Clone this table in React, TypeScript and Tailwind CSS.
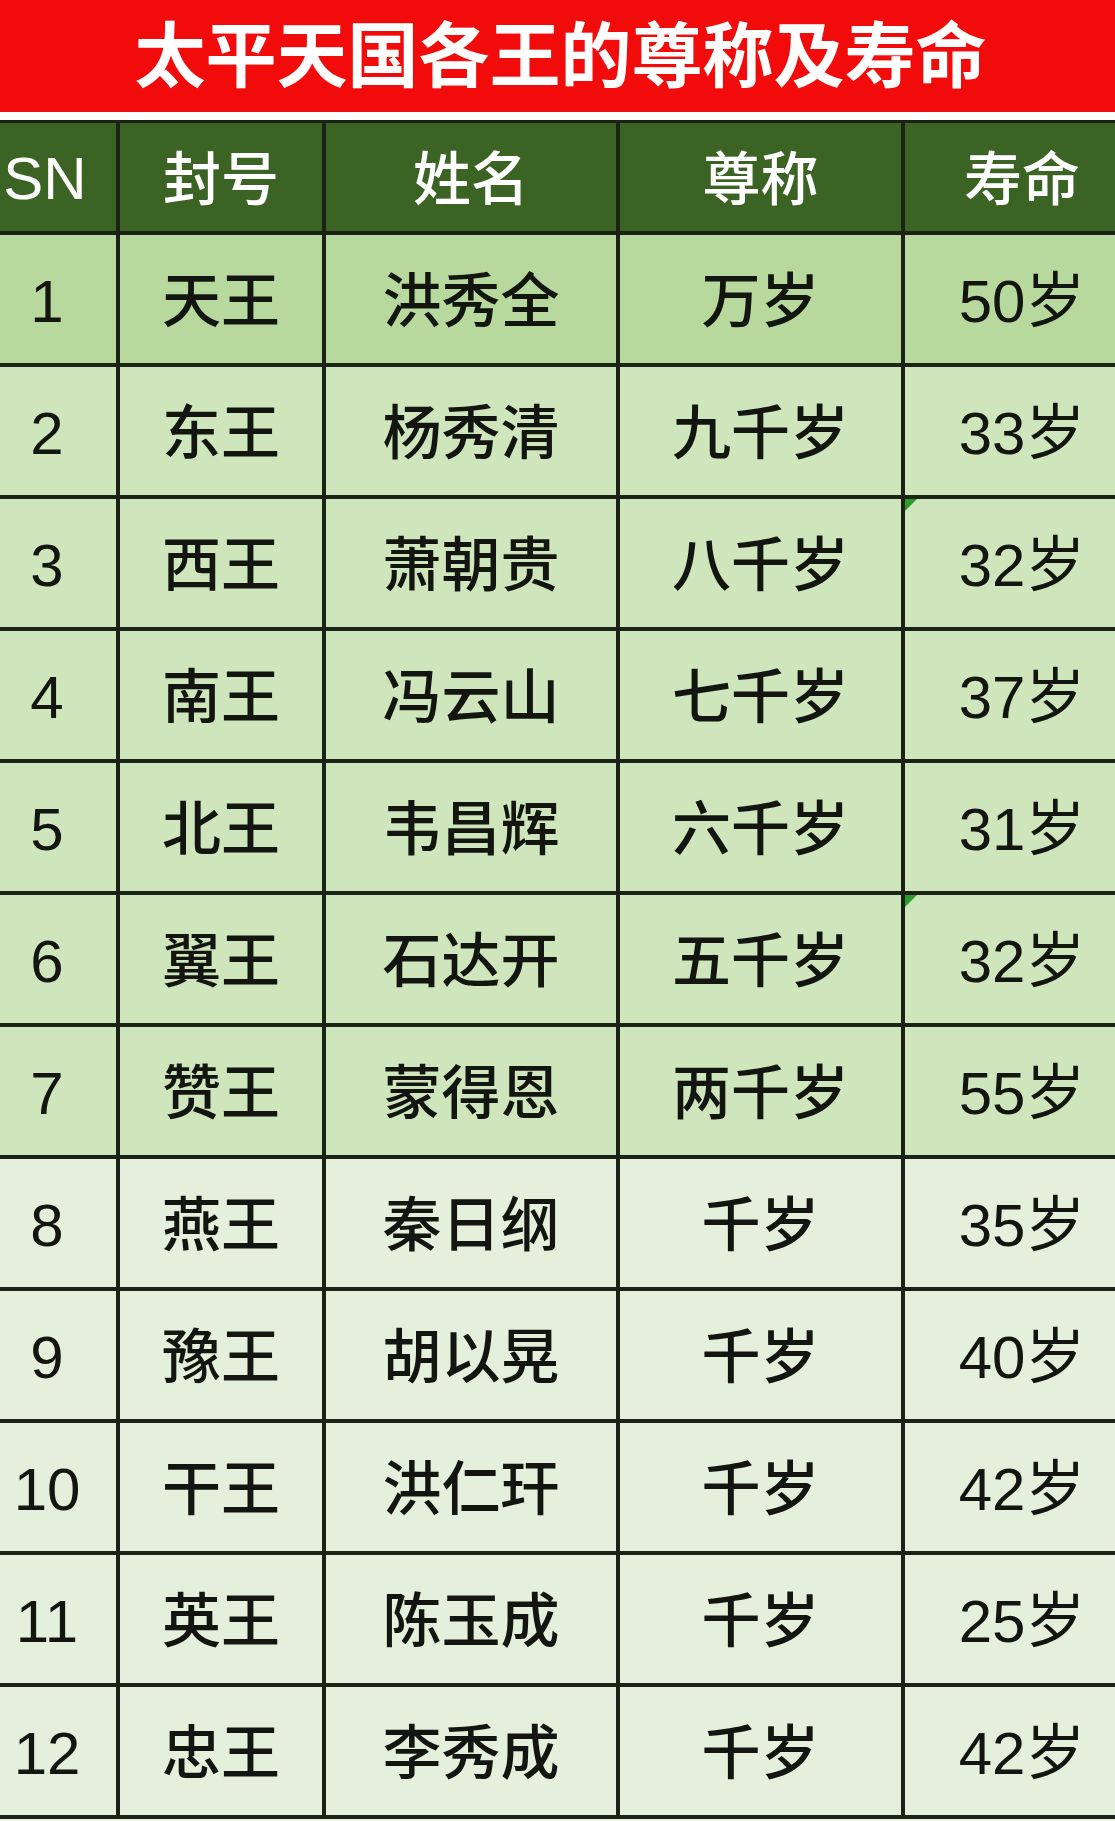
import React from "react";

interface King {
  sn: number;
  title: string;
  name: string;
  honor: string;
  age: string;
  flag?: boolean;
}

const kings: King[] = [
  { sn: 1, title: "天王", name: "洪秀全", honor: "万岁", age: "50岁" },
  { sn: 2, title: "东王", name: "杨秀清", honor: "九千岁", age: "33岁" },
  { sn: 3, title: "西王", name: "萧朝贵", honor: "八千岁", age: "32岁", flag: true },
  { sn: 4, title: "南王", name: "冯云山", honor: "七千岁", age: "37岁" },
  { sn: 5, title: "北王", name: "韦昌辉", honor: "六千岁", age: "31岁" },
  { sn: 6, title: "翼王", name: "石达开", honor: "五千岁", age: "32岁", flag: true },
  { sn: 7, title: "赞王", name: "蒙得恩", honor: "两千岁", age: "55岁" },
  { sn: 8, title: "燕王", name: "秦日纲", honor: "千岁", age: "35岁" },
  { sn: 9, title: "豫王", name: "胡以晃", honor: "千岁", age: "40岁" },
  { sn: 10, title: "干王", name: "洪仁玕", honor: "千岁", age: "42岁" },
  { sn: 11, title: "英王", name: "陈玉成", honor: "千岁", age: "25岁" },
  { sn: 12, title: "忠王", name: "李秀成", honor: "千岁", age: "42岁" },
];

const font = { fontFamily: '"Liberation Sans", "Noto Sans CJK SC", sans-serif' };

function rowBg(sn: number) {
  // 第一行更深，1-7 中绿，8 以后浅绿
  if (sn === 1) return "bg-[#b8d99d]";
  if (sn <= 7) return "bg-[#cfe6bd]";
  return "bg-[#e5f0dc]";
}

export default function App() {
  return (
    <div className="w-[1115px] h-[1821px] overflow-hidden bg-[#e8f0e0]" style={font}>
      {/* 标题 */}
      <div className="h-[112px] bg-[#f20b0b] flex items-center justify-center">
        <h1 className="text-[71px] font-bold text-white leading-none pl-[6px]">太平天国各王的尊称及寿命</h1>
      </div>
      <div className="h-[8px] bg-white" />

      {/* 表格 */}
      <div className="bg-[#1b2317] pt-[3px] pb-[4px] grid grid-cols-[116px_202px_290px_281px_1fr] grid-rows-[108px_repeat(12,128px)] gap-[4px]">
        <div className="bg-[#3b6424] text-white text-[60px] font-medium flex items-center justify-center pr-[26px] pt-[4px]">SN</div>
        <div className="bg-[#3b6424] text-white text-[58px] font-medium flex items-center justify-center pt-[4px]">封号</div>
        <div className="bg-[#3b6424] text-white text-[58px] font-medium flex items-center justify-center pt-[4px]">姓名</div>
        <div className="bg-[#3b6424] text-white text-[58px] font-medium flex items-center justify-center pt-[4px]">尊称</div>
        <div className="bg-[#3b6424] text-white text-[58px] font-medium flex items-center justify-center pl-[24px] pt-[4px]">寿命</div>

        {kings.map((k) => (
          <React.Fragment key={k.sn}>
            <div className={`${rowBg(k.sn)} text-[#121510] text-[60px] flex items-center justify-center pr-[22px] pt-[6px]`}>{k.sn}</div>
            <div className={`${rowBg(k.sn)} text-[#121510] text-[59px] font-medium flex items-center justify-center pt-[6px]`}>{k.title}</div>
            <div className={`${rowBg(k.sn)} text-[#121510] text-[59px] font-medium flex items-center justify-center pt-[6px]`}>{k.name}</div>
            <div className={`${rowBg(k.sn)} text-[#121510] text-[59px] font-medium flex items-center justify-center pt-[6px]`}>{k.honor}</div>
            <div className={`${rowBg(k.sn)} relative text-[#121510] text-[60px] flex items-center justify-center pl-[24px] pt-[6px]`}>
              {k.flag && (
                <span className="absolute left-0 top-0 w-0 h-0 border-t-[12px] border-t-[#2d9b2a] border-r-[12px] border-r-transparent" />
              )}
              {k.age}
            </div>
          </React.Fragment>
        ))}
      </div>
    </div>
  );
}
